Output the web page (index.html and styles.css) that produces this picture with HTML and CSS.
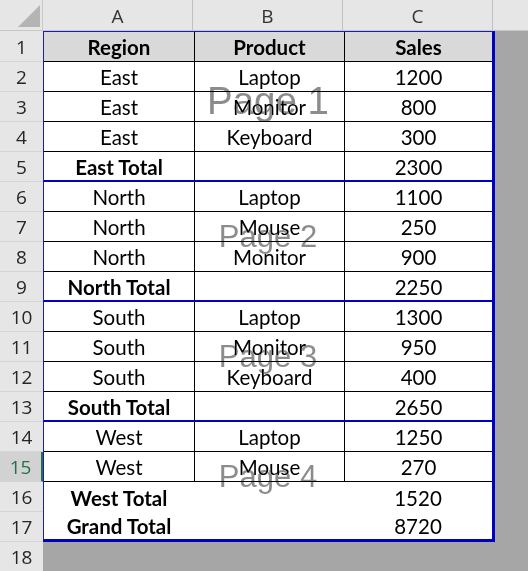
FILE: index.html
```html
<!DOCTYPE html>
<html>
<head>
<meta charset="utf-8">
<link rel="stylesheet" href="styles.css">
</head>
<body>
<div class="sheet">
  <div class="colheads">
    <div class="corner"><svg width="43" height="31" viewBox="0 0 43 31"><polygon points="18,27 40,27 40,5" fill="#b4b4b4"/></svg></div>
    <div class="ch">A</div>
    <div class="ch">B</div>
    <div class="ch">C</div>
    <div class="ch fill"></div>
  </div>
  <div class="body">
    <div class="rowheads">
      <div class="rh first">1</div>
      <div class="rh">2</div>
      <div class="rh">3</div>
      <div class="rh">4</div>
      <div class="rh">5</div>
      <div class="rh">6</div>
      <div class="rh">7</div>
      <div class="rh">8</div>
      <div class="rh">9</div>
      <div class="rh">10</div>
      <div class="rh">11</div>
      <div class="rh">12</div>
      <div class="rh">13</div>
      <div class="rh">14</div>
      <div class="rh sel">15</div>
      <div class="rh">16</div>
      <div class="rh">17</div>
      <div class="rh">18</div>
    </div>
    <div class="main">
      <div class="print">
        <div class="page">
          <div class="row head"><div class="c b">Region</div><div class="c b">Product</div><div class="c b">Sales</div></div>
          <div class="row"><div class="c">East</div><div class="c">Laptop</div><div class="c">1200</div></div>
          <div class="row"><div class="c">East</div><div class="c">Monitor</div><div class="c">800</div></div>
          <div class="row"><div class="c">East</div><div class="c">Keyboard</div><div class="c">300</div></div>
          <div class="row last"><div class="c b">East Total</div><div class="c"></div><div class="c">2300</div></div>
          <span class="wm big">Page 1</span>
        </div>
        <div class="page">
          <div class="row"><div class="c">North</div><div class="c">Laptop</div><div class="c">1100</div></div>
          <div class="row"><div class="c">North</div><div class="c">Mouse</div><div class="c">250</div></div>
          <div class="row"><div class="c">North</div><div class="c">Monitor</div><div class="c">900</div></div>
          <div class="row last"><div class="c b">North Total</div><div class="c"></div><div class="c">2250</div></div>
          <span class="wm">Page 2</span>
        </div>
        <div class="page">
          <div class="row"><div class="c">South</div><div class="c">Laptop</div><div class="c">1300</div></div>
          <div class="row"><div class="c">South</div><div class="c">Monitor</div><div class="c">950</div></div>
          <div class="row"><div class="c">South</div><div class="c">Keyboard</div><div class="c">400</div></div>
          <div class="row last"><div class="c b">South Total</div><div class="c"></div><div class="c">2650</div></div>
          <span class="wm">Page 3</span>
        </div>
        <div class="page">
          <div class="row"><div class="c">West</div><div class="c">Laptop</div><div class="c">1250</div></div>
          <div class="row"><div class="c">West</div><div class="c">Mouse</div><div class="c">270</div></div>
          <div class="row plain"><div class="c b">West Total</div><div class="c"></div><div class="c">1520</div></div>
          <div class="row plain final"><div class="c b">Grand Total</div><div class="c"></div><div class="c">8720</div></div>
          <span class="wm">Page 4</span>
        </div>
      </div>
    </div>
  </div>
</div>
</body>
</html>
```
FILE: styles.css
```css
* { box-sizing: border-box; }
html, body { margin: 0; padding: 0; }
body { width: 528px; height: 571px; overflow: hidden; background: #a6a6a6; }
.sheet { width: 528px; }
.colheads {
  display: flex;
  height: 31px;
  background: #e6e6e6;
  border-bottom: 1px solid #c8c8c8;
}
.corner { width: 43px; flex: none; border-right: 1px solid #c8c8c8; }
.corner svg { display: block; }
.ch {
  width: 150px;
  flex: none;
  border-right: 1px solid #c0c0c0;
  font-family: "Open Sans", "Noto Sans", sans-serif;
  font-size: 19px;
  color: #333;
  display: flex;
  align-items: center;
  justify-content: center;
  padding-top: 1px;
}
.ch.fill { flex: 1; border-right: none; }
.body { display: flex; }
.rowheads { width: 43px; flex: none; background: #e6e6e6; }
.rh {
  height: 30px;
  border-bottom: 1px solid #d4d4d4;
  font-family: "Open Sans", "Noto Sans", sans-serif;
  font-size: 19px;
  color: #262626;
  display: flex;
  align-items: center;
  justify-content: center;
}
.rh.first { height: 31px; padding-top: 1px; }
.rh.sel { background: #d2d2d2; color: #217346; border-right: 2px solid #217346; }
.main { flex: 1; background: #a6a6a6; }
.print {
  width: 452px;
  background: #fff;
  border-left: 1px solid #1c1cb4;
  border-top: 1px solid #1c1cb4;
  border-right: 3px solid #0000c0;
  border-bottom: 3px solid #0000c0;
}
.page { position: relative; }
.page + .page { border-top: 2px solid #0000c0; }
.row {
  display: grid;
  grid-template-columns: 150px 150px 1fr;
  height: 30px;
  border-bottom: 1px solid #000;
}
.row.last { height: 28px; border-bottom: none; }
.row.head { background: #d9d9d9; }
.row.plain { border-bottom: none; }
.row.final { height: 27px; }
.c {
  font-family: Lato, "Open Sans", sans-serif;
  font-size: 20.5px;
  color: #000;
  display: flex;
  align-items: center;
  justify-content: center;
  padding-top: 1px;
  border-left: 1px solid #000;
  white-space: nowrap;
}
.row.last .c { padding-top: 2px; }
.row.final .c { padding-top: 1px; }
.c:first-child { border-left: none; }
.row.plain .c { border-left: none; }
.c.b { font-weight: bold; }
.wm {
  position: absolute;
  left: 50%;
  top: calc(50% - 5px);
  transform: translate(-50%, -50%);
  font-family: "Liberation Sans", Arial, sans-serif;
  font-size: 31px;
  line-height: 1;
  color: #8c8c8c;
  mix-blend-mode: darken;
  white-space: nowrap;
}
.wm.big { font-size: 38.5px; }
```
